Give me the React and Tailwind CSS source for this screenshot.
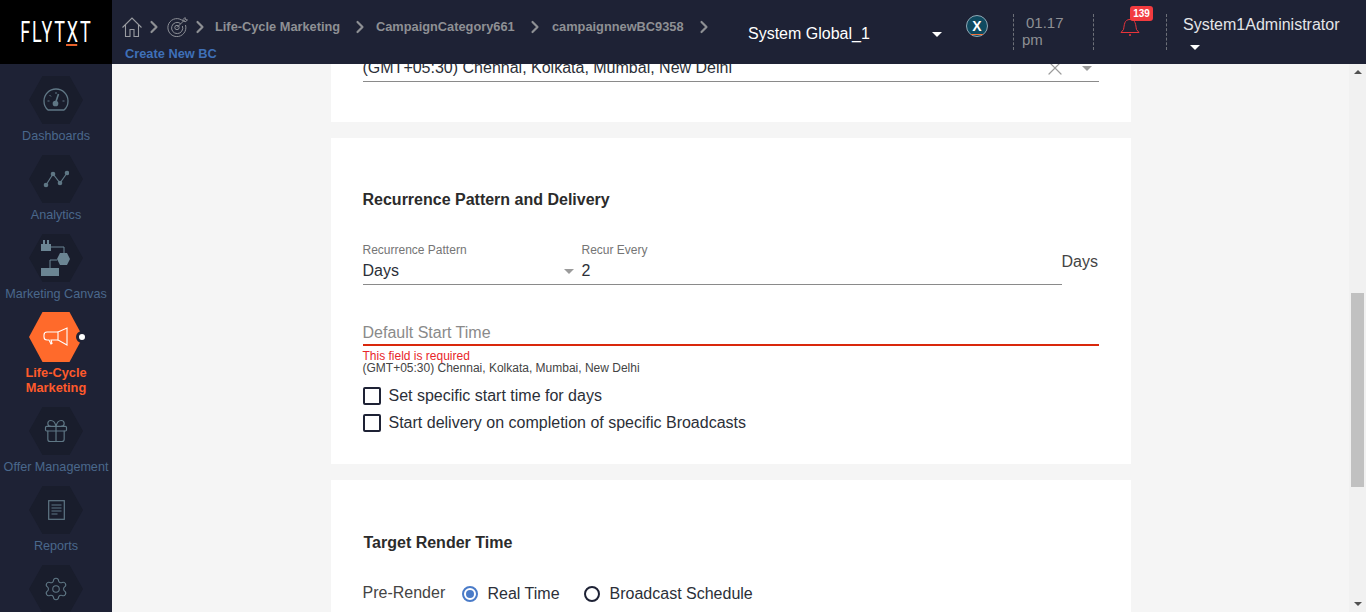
import { ChevronRight, Gift, Settings, X } from 'lucide-react';

const HEX = '[clip-path:polygon(25%_0,75%_0,100%_50%,75%_100%,25%_100%,0_50%)]';

function GaugeIcon() {
  return (
    <svg width="26" height="24" viewBox="0 0 26 24" fill="none" stroke="#5f7785" strokeWidth="1.3">
      <path d="M5 22 C2.5 20 1 16.5 1 13 A12 12 0 0 1 25 13 C25 16.5 23.5 20 21 22 Z" />
      <path d="M13 4v2M4.5 13h2M19.5 13h2M6.5 7l1.5 1.5" strokeWidth="1" />
      <path d="M12.5 15 L15.5 6" strokeWidth="1.6" />
      <circle cx="12.5" cy="15.5" r="2.2" fill="#5f7785" />
    </svg>
  );
}

function AnalyticsIcon() {
  return (
    <svg width="26" height="18" viewBox="0 0 26 18" fill="none" stroke="#5f7785" strokeWidth="1.2">
      <path d="M3 15 L10 4 L17 13 L24 3" />
      <g fill="#5f7785" stroke="none">
        <circle cx="3" cy="15" r="2.3" />
        <circle cx="10" cy="4" r="2.3" />
        <circle cx="17" cy="13" r="2.3" />
        <circle cx="24" cy="3" r="2.3" />
      </g>
    </svg>
  );
}

function CanvasIcon() {
  return (
    <svg width="30" height="36" viewBox="0 0 30 36" fill="none" stroke="#6b8593" strokeWidth="1">
      <path d="M10 7 H23 V13 M16 20 H9 V28" />
      <g fill="#6b8593" stroke="none">
        <path d="M0 4 H2 V0 H4 V4 H6 V0 H8 V4 H10 V11 H0 Z" />
        <polygon points="16,19 19,13 26,13 29,19 26,25 19,25" />
        <rect x="0" y="28" width="18" height="8" />
      </g>
    </svg>
  );
}

function MegaphoneIcon() {
  return (
    <svg width="26" height="20" viewBox="0 0 26 20" fill="none" stroke="#fff" strokeWidth="1.1">
      <path d="M15 5 H4 A3 3 0 0 0 1 8 V10 A3 3 0 0 0 4 13 H6 L8 17 L9 16.5 L8 13 H15" />
      <path d="M15 5 L24 1 V18 L15 13 Z" />
    </svg>
  );
}

function ReportIcon() {
  return (
    <svg width="17" height="20" viewBox="0 0 17 20" fill="none" stroke="#5f7785" strokeWidth="1.2">
      <rect x="0.7" y="0.7" width="15.6" height="18.6" />
      <path d="M3.5 5h10M3.5 8h10M3.5 11h10M3.5 14h6" />
    </svg>
  );
}

function HomeIcon() {
  return (
    <svg width="20" height="20" viewBox="0 0 20 20" fill="none" stroke="#9a9ca1" strokeWidth="1.1" className="shrink-0">
      <path d="M0.5 10.5 L10 1 L19.5 10.5 M3.5 8 V19.5 H8 V12.5 H12 V19.5 H16.5 V8" />
    </svg>
  );
}

function TargetIcon() {
  return (
    <svg width="21" height="20" viewBox="0 0 21 20" fill="none" stroke="#8c8f96" strokeWidth="1">
      <path d="M16.5 4.5 A9 9 0 1 0 18.5 8" />
      <path d="M13.5 6.5 A5.6 5.6 0 1 0 15.4 9" />
      <circle cx="10" cy="10.5" r="2.2" />
      <path d="M10 10.5 L18 2.5 M16 2.5 L18 0.5 L18.5 2.5 L20.5 3 L18 5 Z" />
    </svg>
  );
}

function BrandBadge() {
  return (
    <div className="flex h-[22px] w-[22px] items-center justify-center rounded-full border border-[#8fa8b5] bg-[#0f4a60]">
      <span className="relative text-[14px] leading-none font-bold text-white">
        X
        <span className="absolute right-[-1px] bottom-[-2px] left-[-1px] h-px bg-[#f0703a]" />
      </span>
    </div>
  );
}

function Caret({ className }) {
  return <span className={`inline-block h-0 w-0 border-x-[5px] border-t-[5px] border-x-transparent ${className}`} />;
}

function Crumb({ children, className = '' }) {
  return <span className={`text-[12.8px] leading-5 font-bold whitespace-nowrap text-[#8e9094] ${className}`}>{children}</span>;
}

function Chevron({ className = '' }) {
  return <ChevronRight size={20} strokeWidth={2.6} className={`shrink-0 text-[#8e9094] ${className}`} />;
}

function Divider({ className = '' }) {
  return <div className={`h-9 w-0 shrink-0 border-l border-dashed border-[#6d7078] ${className}`} />;
}

function Header() {
  return (
    <header className="flex h-16 shrink-0 bg-[#1e2235]">
      <div className="flex w-28 shrink-0 items-center justify-center bg-black">
        <span className="relative scale-x-[0.62] font-['Roboto',sans-serif] text-[29px] leading-none font-normal tracking-[3px] whitespace-nowrap text-white">
          FLYTXT
          <span className="absolute bottom-[1px] left-[63%] h-[2px] w-[18px] bg-[#e8622c]" />
        </span>
      </div>

      <div className="w-[622px] shrink-0 pt-[16px] pl-[10px]">
        <div className="flex h-[21px] items-center">
          <HomeIcon />
          <Chevron className="ml-[2px]" />
          <span className="ml-[3px]"><TargetIcon /></span>
          <Chevron className="ml-[2px]" />
          <Crumb className="ml-[5px] w-[125px]">Life-Cycle Marketing</Crumb>
          <Chevron className="ml-[10px]" />
          <Crumb className="ml-[6px] w-[139px]">CampaignCategory661</Crumb>
          <Chevron className="ml-[10px]" />
          <Crumb className="ml-[7px] w-[132px]">campaignnewBC9358</Crumb>
          <Chevron className="ml-[10px]" />
        </div>
        <div className="mt-[7px] pl-[3px] text-[12.8px] leading-5 font-bold text-[#3f70b8]">Create New BC</div>
      </div>

      <div className="flex w-[279px] shrink-0 items-center">
        <span className="mt-[4px] ml-[14px] w-[184px] text-[16px] whitespace-nowrap text-white">System Global_1</span>
        <Caret className="mt-[5px] border-t-white" />
        <div className="mb-[12px] ml-[24px]"><BrandBadge /></div>
      </div>

      <div className="flex items-start pt-[14px]">
        <Divider />
        <div className="w-[79px] shrink-0 pl-[8px] text-[15px] leading-[17px] text-[#8e9094]">
          <div className="pl-[4px]">01.17</div>
          <div>pm</div>
        </div>
        <Divider />
        <div className="relative w-[72px] shrink-0 pt-[3px] pl-[26px]">
          <svg width="20" height="20" viewBox="0 0 20 20" fill="none" stroke="#e8343a" strokeWidth="1">
            <path d="M1 15.5 H19 L16.5 12.5 C15.5 8 16 2.5 10 2.5 C4 2.5 4.5 8 3.5 12.5 Z" />
            <path d="M9 18 h2" strokeWidth="1.5" />
          </svg>
          <span className="absolute top-[-8px] left-[36px] h-[15px] w-[23px] rounded-[3px] bg-[#f23b3f] text-center text-[10px] leading-[15px] font-bold text-white">139</span>
        </div>
        <Divider />
        <div className="pt-px pl-[16px] text-[16px] leading-5 whitespace-nowrap text-[#e4e5e8]">
          <div>System1Administrator</div>
          <Caret className="mt-[4px] ml-[7px] block border-t-white" />
        </div>
      </div>
    </header>
  );
}

function NavItem({ icon, label, active }) {
  return (
    <div className={`flex flex-col items-center ${active ? '-mt-px h-[95px]' : 'h-[79px]'}`}>
      <div className={`relative ${active ? 'h-[50px]' : 'h-12'} w-[54px] shrink-0`}>
        <div className={`flex h-full w-full items-center justify-center ${HEX} ${active ? 'bg-[#ff6a2b]' : 'bg-[#191d2c]'}`}>
          {icon}
        </div>
        {active && <span className="absolute top-[19px] right-[-5px] box-content h-[6px] w-[6px] rounded-full border-[3px] border-[#1e2235] bg-white" />}
      </div>
      {label && (
        <div className={`text-center leading-[15px] whitespace-nowrap ${active ? 'mt-[3px] text-[12.8px] font-bold text-[#ff5a2b]' : 'mt-[5px] text-[12.6px] text-[#4a688c]'}`}>
          {label}
        </div>
      )}
    </div>
  );
}

function Sidebar() {
  return (
    <aside className="w-28 shrink-0 overflow-hidden bg-[#1e2235] pt-3">
      <NavItem icon={<GaugeIcon />} label="Dashboards" />
      <NavItem icon={<AnalyticsIcon />} label="Analytics" />
      <NavItem icon={<CanvasIcon />} label="Marketing Canvas" />
      <NavItem icon={<MegaphoneIcon />} label={<>Life-Cycle<br />Marketing</>} active />
      <NavItem icon={<Gift size={28} strokeWidth={1} className="text-[#5f7785]" />} label="Offer Management" />
      <NavItem icon={<ReportIcon />} label="Reports" />
      <NavItem icon={<Settings size={26} strokeWidth={1} className="text-[#5f7785]" />} />
    </aside>
  );
}

function Checkbox({ label }) {
  return (
    <label className="flex h-[27px] items-center">
      <span className="h-[18px] w-[18px] shrink-0 rounded-[2px] border-2 border-[#1e2235]" />
      <span className="ml-2 text-[16px] text-[#2b2f38]">{label}</span>
    </label>
  );
}

function Radio({ label, checked, className = '' }) {
  return (
    <label className={`flex items-center ${className}`}>
      <span className={`flex h-4 w-4 shrink-0 items-center justify-center rounded-full border-2 ${checked ? 'border-[#4a7bc8]' : 'border-[#1e2235]'}`}>
        {checked && <span className="h-2 w-2 rounded-full bg-[#4a7bc8]" />}
      </span>
      <span className="ml-[10px] text-[16px] text-[#2b2f38]">{label}</span>
    </label>
  );
}

function Form() {
  return (
    <div className="mx-auto -mt-10 flex w-[800px] flex-col gap-4">
      <section className="h-[98px] bg-white px-8 pt-[33px]">
        <div className="flex h-[25px] items-center border-b border-[#8a8a8a] pb-[2px]">
          <span className="flex-1 text-[16px] leading-5 text-[#2b2f38]">(GMT+05:30) Chennai, Kolkata, Mumbai, New Delhi</span>
          <X size={24} strokeWidth={1.2} className="-mr-[4px] -ml-[2px] text-[#9b9b9b]" />
          <Caret className="mr-[7px] ml-[19px] border-t-[#9b9b9b]" />
        </div>
      </section>

      <section className="h-[326px] bg-white px-8 pt-[51px]">
        <h2 className="text-[16px] leading-[22px] font-bold text-[#2b2b2b]">Recurrence Pattern and Delivery</h2>

        <div className="mt-[27px] flex h-[47px] pt-[5px]">
          <div className="flex w-[699px] border-b border-[#8a8a8a]">
            <div className="w-[219px] shrink-0">
              <div className="pb-[2px] text-[12px] leading-[14px] text-[#757575]">Recurrence Pattern</div>
              <div className="flex h-[24px] items-center">
                <span className="flex-1 text-[16px] text-[#2b2f38]">Days</span>
                <Caret className="mr-[8px] border-t-[#9b9b9b]" />
              </div>
            </div>
            <div>
              <div className="pb-[2px] text-[12px] leading-[14px] text-[#757575]">Recur Every</div>
              <div className="h-[24px] text-[16px] leading-[24px] text-[#2b2f38]">2</div>
            </div>
          </div>
          <div className="pt-[9px] text-[16px] leading-5 text-[#444]">Days</div>
        </div>

        <div className="mt-[37px] h-[24px] border-b-2 border-[#d9280c] text-[16px] leading-[22px] text-[#8a8a8a]">Default Start Time</div>
        <div className="mt-[5px] text-[12px] leading-[11px] text-[#e8252a]">This field is required</div>
        <div className="text-[12px] leading-[12px] text-[#444]">(GMT+05:30) Chennai, Kolkata, Mumbai, New Delhi</div>

        <div className="mt-[8px]">
          <Checkbox label="Set specific start time for days" />
          <Checkbox label="Start delivery on completion of specific Broadcasts" />
        </div>
      </section>

      <section className="h-[200px] bg-white px-8 pt-[52px]">
        <h2 className="pl-px text-[16px] leading-[22px] font-bold text-[#2b2b2b]">Target Render Time</h2>
        <div className="mt-[28px] flex h-[24px] items-center">
          <span className="w-[99px] shrink-0 pb-[2px] text-[16px] text-[#444]">Pre-Render</span>
          <Radio label="Real Time" checked />
          <Radio label="Broadcast Schedule" className="ml-6" />
        </div>
      </section>
    </div>
  );
}

function ScrollBar() {
  return (
    <div className="flex w-[17px] shrink-0 flex-col items-center bg-[#f1f1f1]">
      <span className="mt-[6px] h-0 w-0 border-x-[4px] border-b-[4px] border-x-transparent border-b-[#505050]" />
      <div className="mt-[219px] h-[194px] w-[13px] bg-[#c1c1c1]" />
      <span className="mt-auto mb-[6px] h-0 w-0 border-x-[4px] border-t-[4px] border-x-transparent border-t-[#505050]" />
    </div>
  );
}

export default function App() {
  return (
    <div className="flex h-[612px] w-full flex-col overflow-hidden bg-[#f5f5f5] font-['Liberation_Sans',Arial,sans-serif]">
      <Header />
      <div className="flex min-h-0 flex-1">
        <Sidebar />
        <main className="min-w-0 flex-1 overflow-hidden">
          <Form />
        </main>
        <ScrollBar />
      </div>
    </div>
  );
}
